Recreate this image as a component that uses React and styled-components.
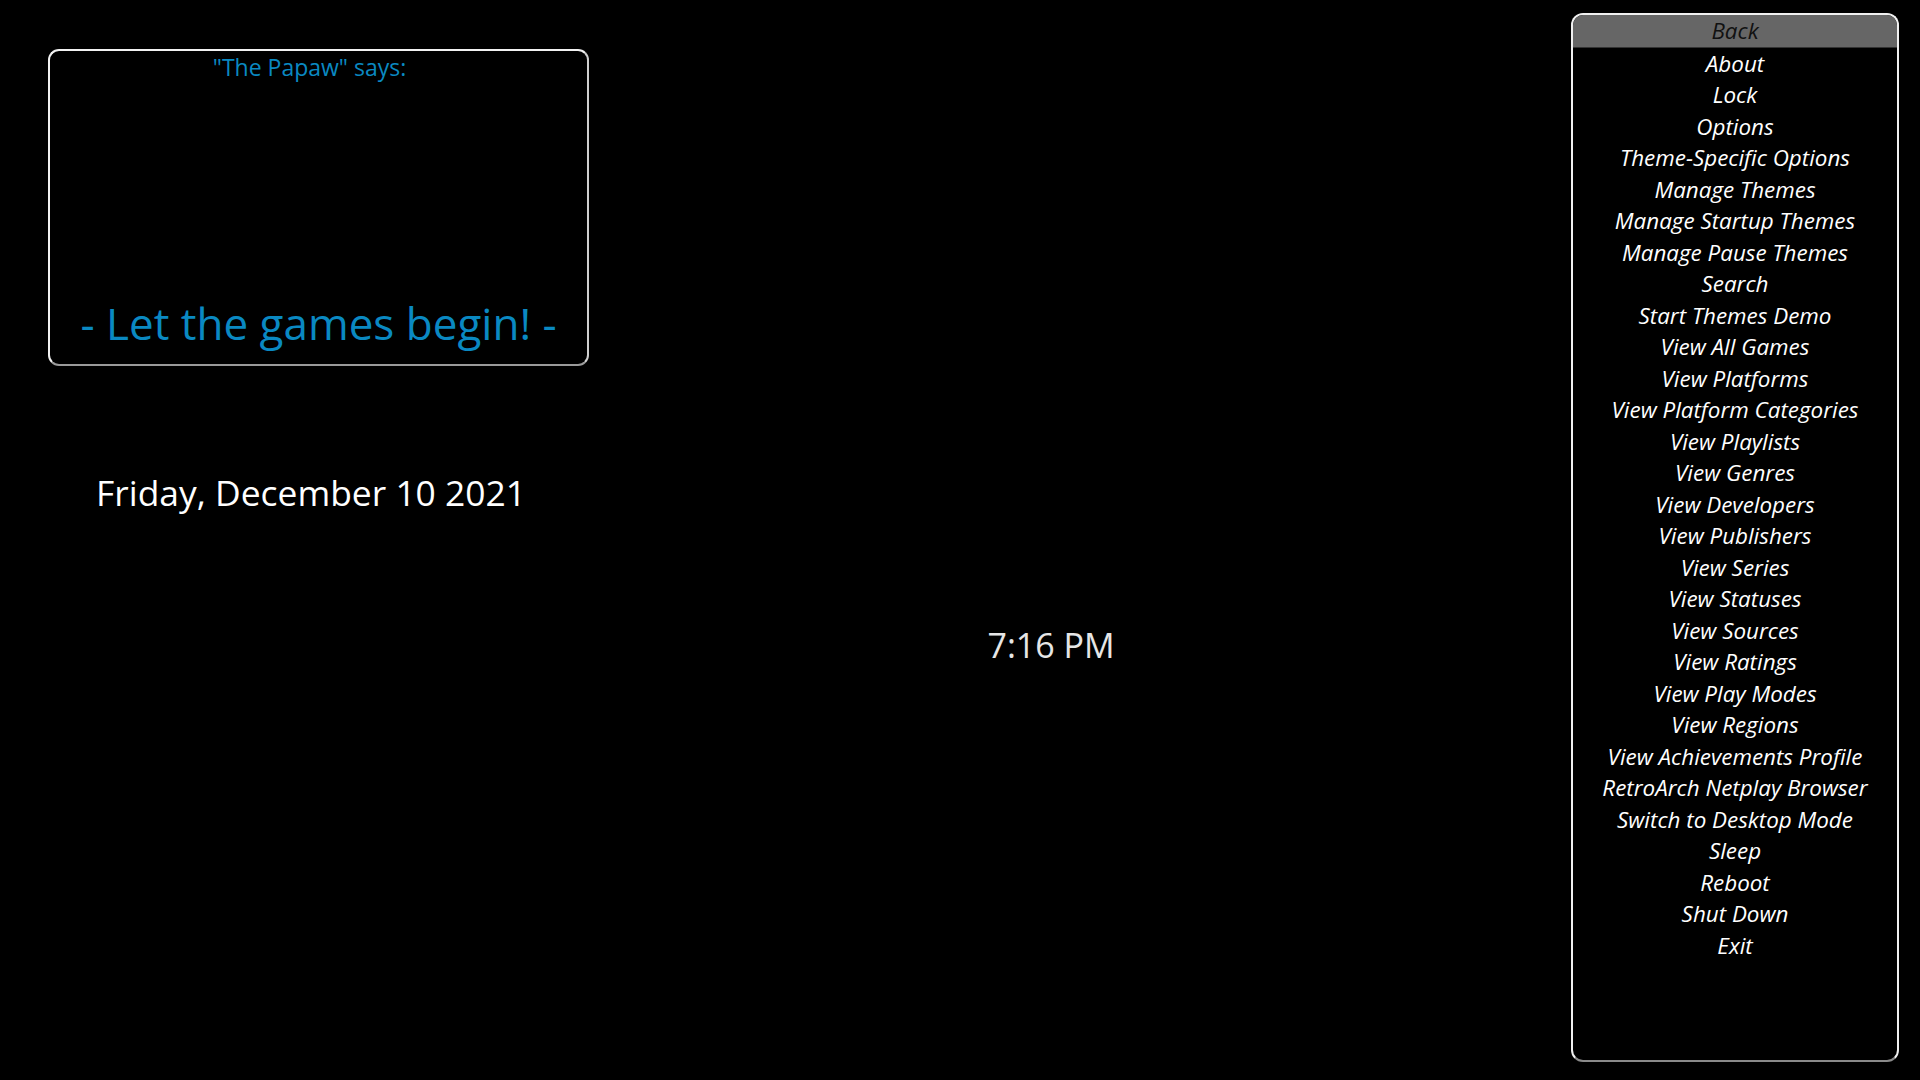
import React from 'react';
import styled, { createGlobalStyle } from 'styled-components';

const GlobalStyle = createGlobalStyle`
  html, body {
    margin: 0;
    padding: 0;
    background: #000;
  }
  body {
    font-family: 'Open Sans', 'Noto Sans', sans-serif;
  }
`;

const Screen = styled.div`
  width: 1920px;
  height: 1080px;
  display: flex;
  background: #000;
  overflow: hidden;
`;

const LeftColumn = styled.div`
  width: 541px;
  margin-left: 48px;
  padding-top: 49px;
  display: flex;
  flex-direction: column;
`;

const QuoteBox = styled.div`
  height: 317px;
  box-sizing: border-box;
  border: 2px solid #f2f2f2;
  border-bottom-color: #9a9a9a;
  border-right-color: #cfcfcf;
  border-radius: 11px;
  display: flex;
  flex-direction: column;
  align-items: center;
  justify-content: space-between;
  padding: 1px 0 13px;
  color: #0a89c2;
`;

const QuoteAuthor = styled.div`
  font-size: 23px;
  line-height: 30px;
  padding-right: 18px;
`;

const QuoteText = styled.div`
  font-size: 44px;
  line-height: 56px;
`;

const DateLine = styled.div`
  margin-top: 102px;
  padding-left: 48px;
  font-size: 35.4px;
  line-height: 48px;
  color: #fff;
`;

const Middle = styled.div`
  flex: 1;
  display: flex;
  justify-content: center;
  padding-top: 623px;
  padding-right: 58px;
`;

const Clock = styled.div`
  font-size: 34px;
  line-height: 44px;
  color: #e6e6e6;
  height: 44px;
`;

const Menu = styled.div`
  width: 328px;
  height: 1049px;
  margin-top: 13px;
  margin-right: 21px;
  box-sizing: border-box;
  border: 2px solid #f0f0f0;
  border-bottom-color: #8a8a8a;
  border-radius: 12px;
  overflow: hidden;
  display: flex;
  flex-direction: column;
`;

const MenuItem = styled.div`
  height: 31.5px;
  line-height: 31.5px;
  text-align: center;
  font-style: italic;
  font-size: 22.4px;
  white-space: nowrap;
  color: ${p => (p.$active ? '#111' : '#fff')};
  background: ${p => (p.$active ? '#666' : 'transparent')};
  border-bottom: ${p => (p.$active ? '1px solid #333' : 'none')};
`;

const items = [
  'Back',
  'About',
  'Lock',
  'Options',
  'Theme-Specific Options',
  'Manage Themes',
  'Manage Startup Themes',
  'Manage Pause Themes',
  'Search',
  'Start Themes Demo',
  'View All Games',
  'View Platforms',
  'View Platform Categories',
  'View Playlists',
  'View Genres',
  'View Developers',
  'View Publishers',
  'View Series',
  'View Statuses',
  'View Sources',
  'View Ratings',
  'View Play Modes',
  'View Regions',
  'View Achievements Profile',
  'RetroArch Netplay Browser',
  'Switch to Desktop Mode',
  'Sleep',
  'Reboot',
  'Shut Down',
  'Exit'
];

export default function App() {
  return (
    <Screen>
      <GlobalStyle />
      <LeftColumn>
        <QuoteBox>
          <QuoteAuthor>"The Papaw" says:</QuoteAuthor>
          <QuoteText>- Let the games begin! -</QuoteText>
        </QuoteBox>
        <DateLine>Friday, December 10 2021</DateLine>
      </LeftColumn>
      <Middle>
        <Clock>7:16 PM</Clock>
      </Middle>
      <Menu>
        {items.map((item, i) => (
          <MenuItem key={item} $active={i === 0}>
            {item}
          </MenuItem>
        ))}
      </Menu>
    </Screen>
  );
}
